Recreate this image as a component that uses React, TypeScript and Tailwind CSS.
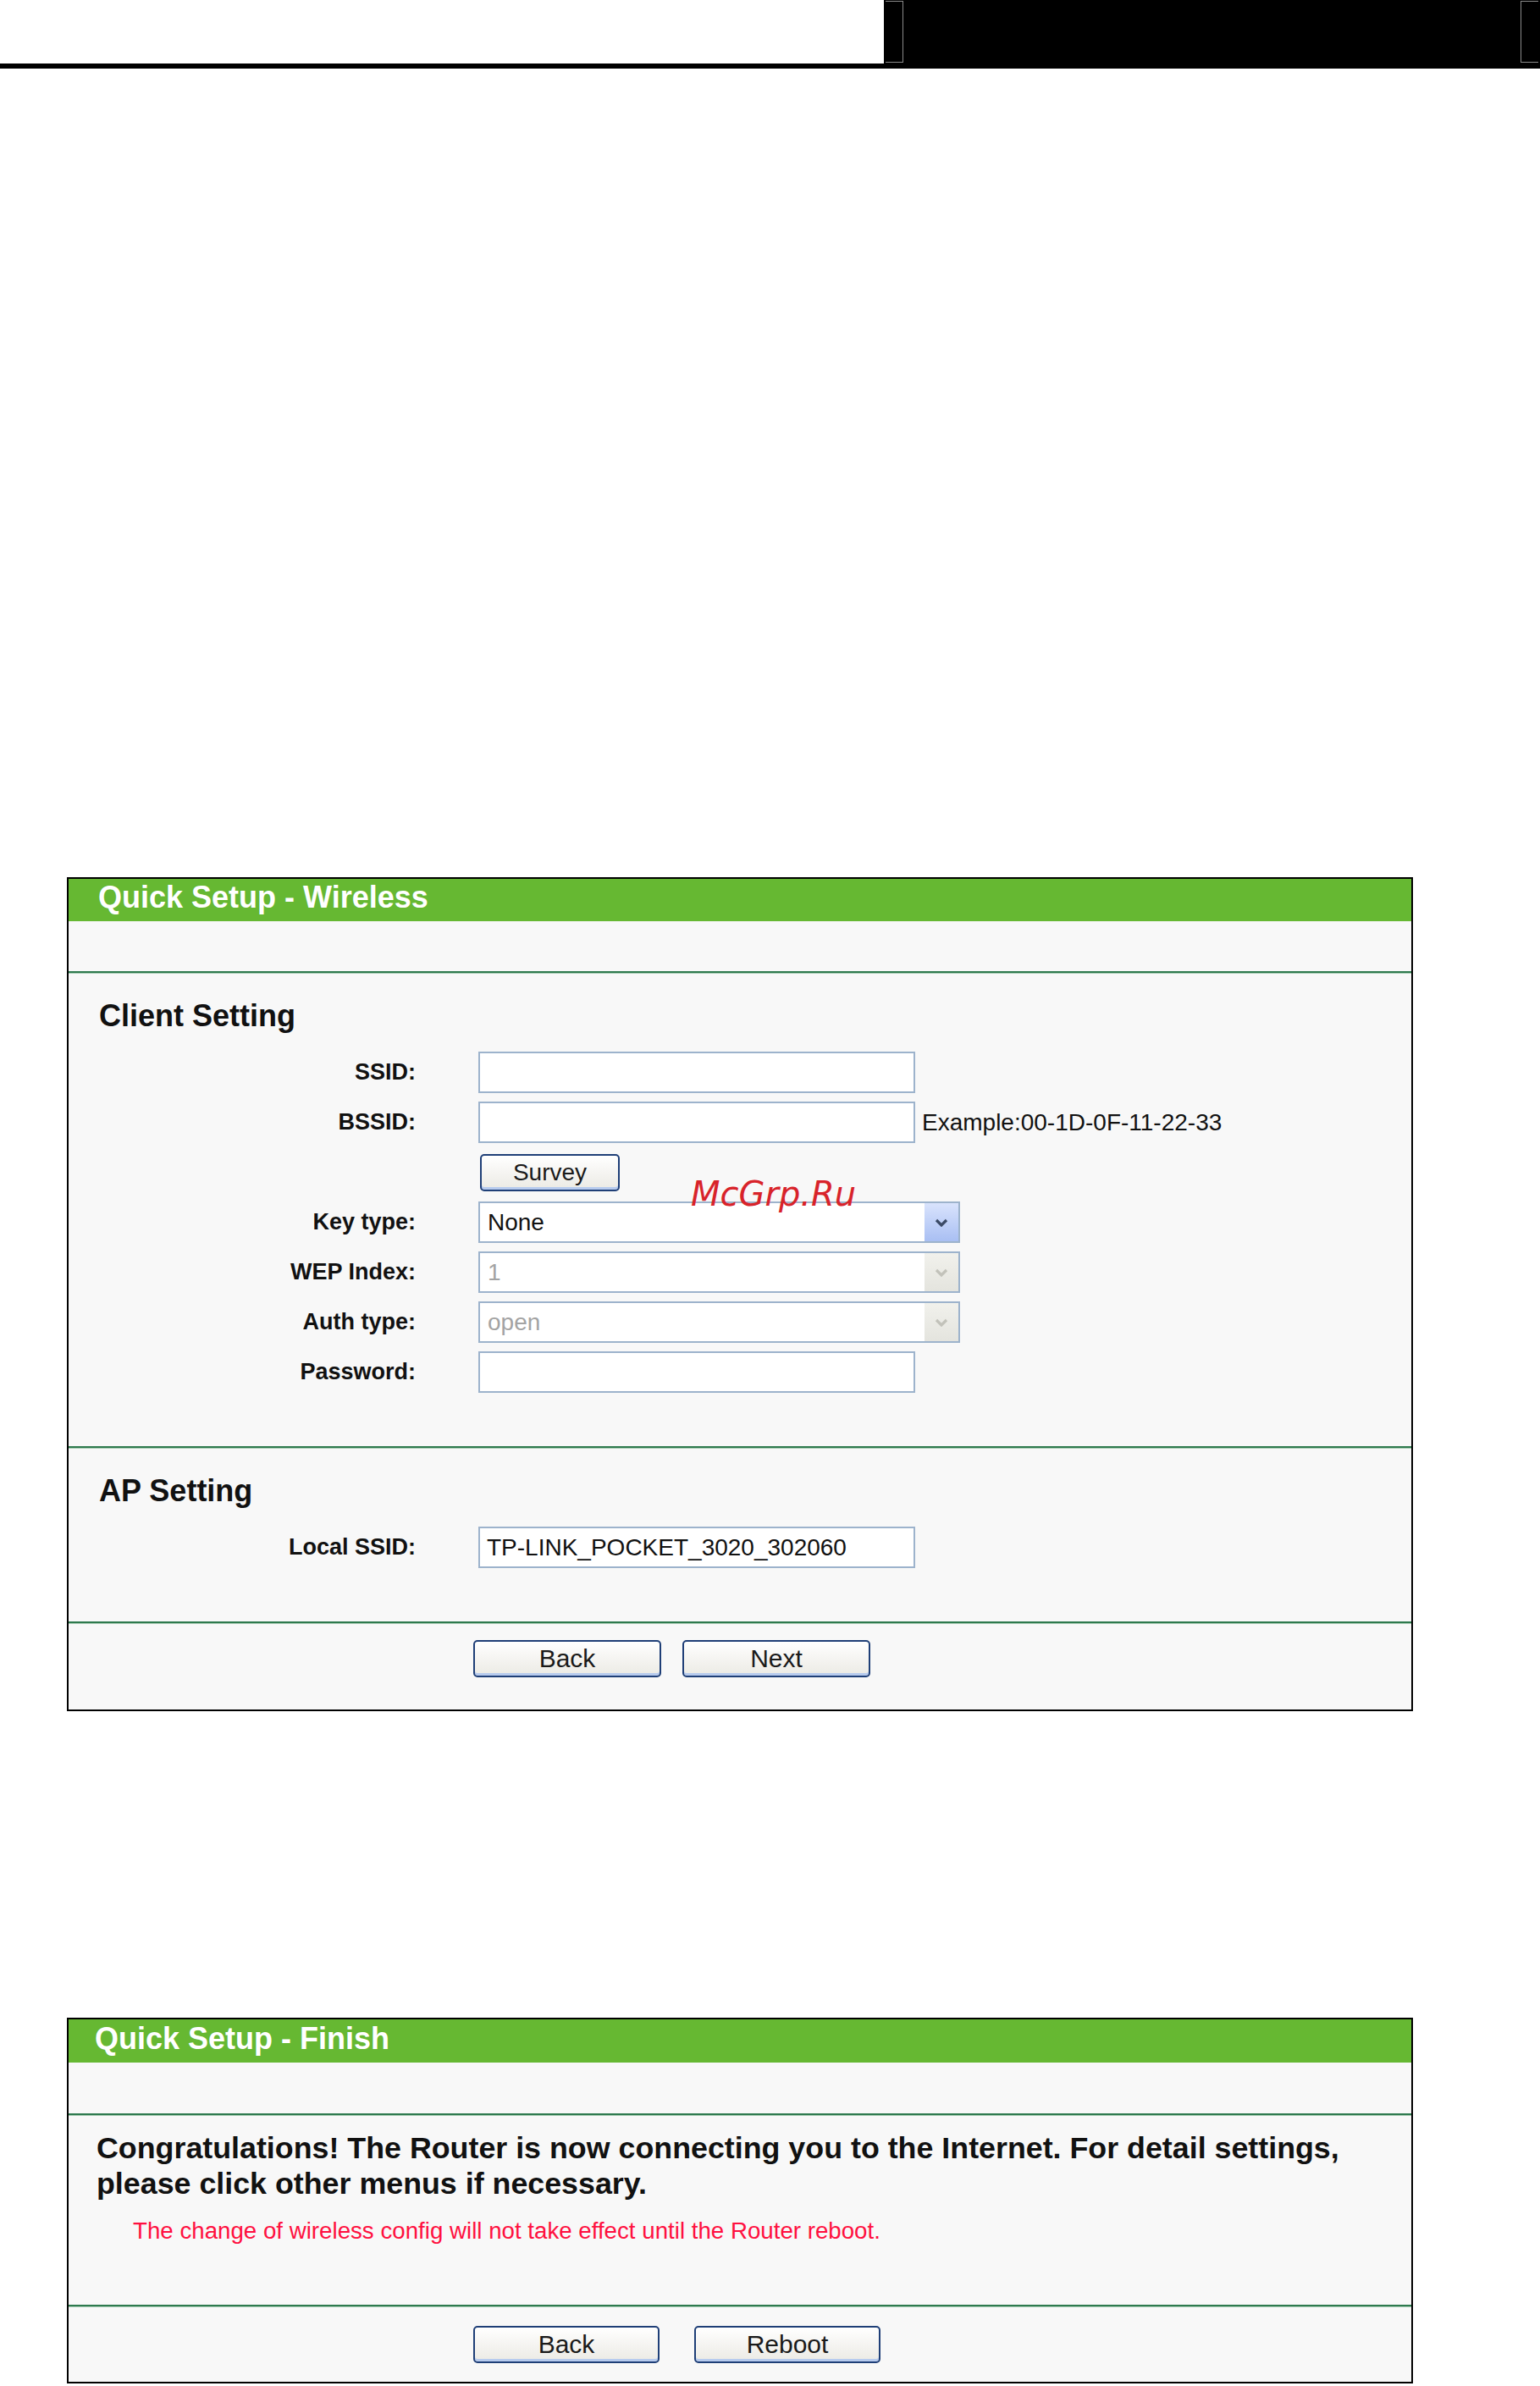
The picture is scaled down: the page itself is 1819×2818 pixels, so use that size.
import React from "react"

function Chevron({ disabled }: { disabled?: boolean }) {
    return (
        <svg width="16" height="10" viewBox="0 0 16 10">
            <polyline
                points="2,2 8,8 14,2"
                fill="none"
                stroke={disabled ? "#c2c2ba" : "#3b4a66"}
                strokeWidth="3.2"
            />
        </svg>
    )
}

function Label({ children }: { children: React.ReactNode }) {
    return (
        <div className="w-[410px] shrink-0 text-right text-[27px] font-bold text-[#111] leading-none">
            {children}
        </div>
    )
}

function TextBox({ value }: { value?: string }) {
    return (
        <div className="ml-[74px] w-[516px] h-[49px] border-2 border-[#9db3cc] bg-white flex items-center px-[8px] text-[28px] text-[#111] leading-none">
            {value}
        </div>
    )
}

function Select({ value, disabled }: { value: string; disabled?: boolean }) {
    return (
        <div className="ml-[74px] w-[569px] h-[49px] border-2 border-[#9db3cc] bg-white flex items-stretch">
            <div
                className={
                    "flex-1 flex items-center pl-[9px] text-[28px] leading-none " +
                    (disabled ? "text-[#a3a3a3]" : "text-[#111]")
                }
            >
                {value}
            </div>
            <div
                className={
                    "w-[40px] flex items-center justify-center " +
                    (disabled
                        ? "bg-gradient-to-b from-[#f1f1ec] to-[#e4e4de]"
                        : "bg-gradient-to-b from-[#d9e3fc] to-[#a9bff3]")
                }
            >
                <Chevron disabled={disabled} />
            </div>
        </div>
    )
}

function Button({ children, w, size }: { children: React.ReactNode; w: string; size: string }) {
    return (
        <div
            className={
                "h-[44px] border-2 border-[#1f3f77] rounded-[5px] bg-gradient-to-b from-white to-[#ebeae4] shadow-[inset_0_-3px_0_#b7cbee] flex items-center justify-center text-[#1a1a1a] leading-none " +
                w +
                " " +
                size
            }
        >
            {children}
        </div>
    )
}

function GreenRule() {
    return (
        <div>
            <div className="h-[2px] bg-[#2e7a4e]" />
            <div className="h-[1px] bg-[#a9cdb5]" />
        </div>
    )
}

export default function App() {
    return (
        <div className="w-[1819px] min-h-[2818px] bg-white font-['Liberation_Sans',Arial,sans-serif]">
            {/* ページ上部の帯 */}
            <div className="flex h-[81px]">
                <div className="w-[1044px] h-full border-b-[6px] border-black" />
                <div className="flex-1 bg-black flex justify-between pl-[2px] pr-[2px] pt-[1px]">
                    <div className="w-[21px] h-[73px] border-t border-b border-r border-[#8a8a8a]" />
                    <div className="w-[21px] h-[73px] border-t border-b border-l border-[#8a8a8a]" />
                </div>
            </div>

            <div className="h-[955px]" />

            {/* Quick Setup - Wireless */}
            <div className="relative ml-[79px] w-[1590px] border-2 border-black bg-[#f8f8f8]">
                <div className="h-[50px] bg-[#66b832] pl-[35px] text-[36px] font-bold text-white leading-[43px]">
                    Quick Setup - Wireless
                </div>
                <div className="h-[59px]" />
                <GreenRule />

                <div className="pt-[30px] pb-[63px]">
                    <div className="pl-[36px] text-[36px] font-bold text-[#111] leading-[40px]">Client Setting</div>
                    <div className="mt-[22px] flex flex-col gap-[10px]">
                        <div className="flex items-center h-[49px]">
                            <Label>SSID:</Label>
                            <TextBox />
                        </div>
                        <div className="flex items-center h-[49px]">
                            <Label>BSSID:</Label>
                            <TextBox />
                            <span className="ml-[8px] text-[28px] text-[#111] leading-none">
                                Example:00-1D-0F-11-22-33
                            </span>
                        </div>
                        <div className="flex items-center h-[49px]">
                            <Label>{""}</Label>
                            <div className="ml-[76px]">
                                <Button w="w-[165px]" size="text-[28px]">
                                    Survey
                                </Button>
                            </div>
                        </div>
                        <div className="flex items-center h-[49px]">
                            <Label>Key type:</Label>
                            <Select value="None" />
                        </div>
                        <div className="flex items-center h-[49px]">
                            <Label>WEP Index:</Label>
                            <Select value="1" disabled />
                        </div>
                        <div className="flex items-center h-[49px]">
                            <Label>Auth type:</Label>
                            <Select value="open" disabled />
                        </div>
                        <div className="flex items-center h-[49px]">
                            <Label>Password:</Label>
                            <TextBox />
                        </div>
                    </div>
                </div>
                <GreenRule />

                <div className="pt-[30px] pb-[63px]">
                    <div className="pl-[36px] text-[36px] font-bold text-[#111] leading-[40px]">AP Setting</div>
                    <div className="mt-[22px] flex items-center h-[49px]">
                        <Label>Local SSID:</Label>
                        <TextBox value="TP-LINK_POCKET_3020_302060" />
                    </div>
                </div>
                <GreenRule />

                <div className="pt-[19px] pb-[38px] pl-[478px] flex gap-[25px]">
                    <Button w="w-[222px]" size="text-[30px]">
                        Back
                    </Button>
                    <Button w="w-[222px]" size="text-[30px]">
                        Next
                    </Button>
                </div>

                {/* 透かし */}
                <div className="absolute left-[735px] top-[352px] text-[40px] leading-[40px] italic text-[#d8232a] font-['DejaVu_Sans',sans-serif]">
                    McGrp.Ru
                </div>
            </div>

            <div className="h-[362px]" />

            {/* Quick Setup - Finish */}
            <div className="ml-[79px] w-[1590px] border-2 border-black bg-[#f8f8f8]">
                <div className="h-[51px] bg-[#66b832] pl-[31px] text-[36px] font-bold text-white leading-[45px]">
                    Quick Setup - Finish
                </div>
                <div className="h-[60px]" />
                <GreenRule />

                <div className="pt-[17px] pb-[71px] pl-[33px] pr-[50px]">
                    <p className="text-[35.8px] font-bold text-[#111] leading-[42px]">
                        Congratulations! The Router is now connecting you to the Internet. For detail settings,
                        please click other menus if necessary.
                    </p>
                    <p className="mt-[19px] ml-[43px] text-[27.7px] text-[#ff1040] leading-[32px]">
                        The change of wireless config will not take effect until the Router reboot.
                    </p>
                </div>
                <GreenRule />

                <div className="pt-[22px] pb-[22px] pl-[478px] flex gap-[41px]">
                    <Button w="w-[220px]" size="text-[30px]">
                        Back
                    </Button>
                    <Button w="w-[220px]" size="text-[30px]">
                        Reboot
                    </Button>
                </div>
            </div>
        </div>
    )
}
